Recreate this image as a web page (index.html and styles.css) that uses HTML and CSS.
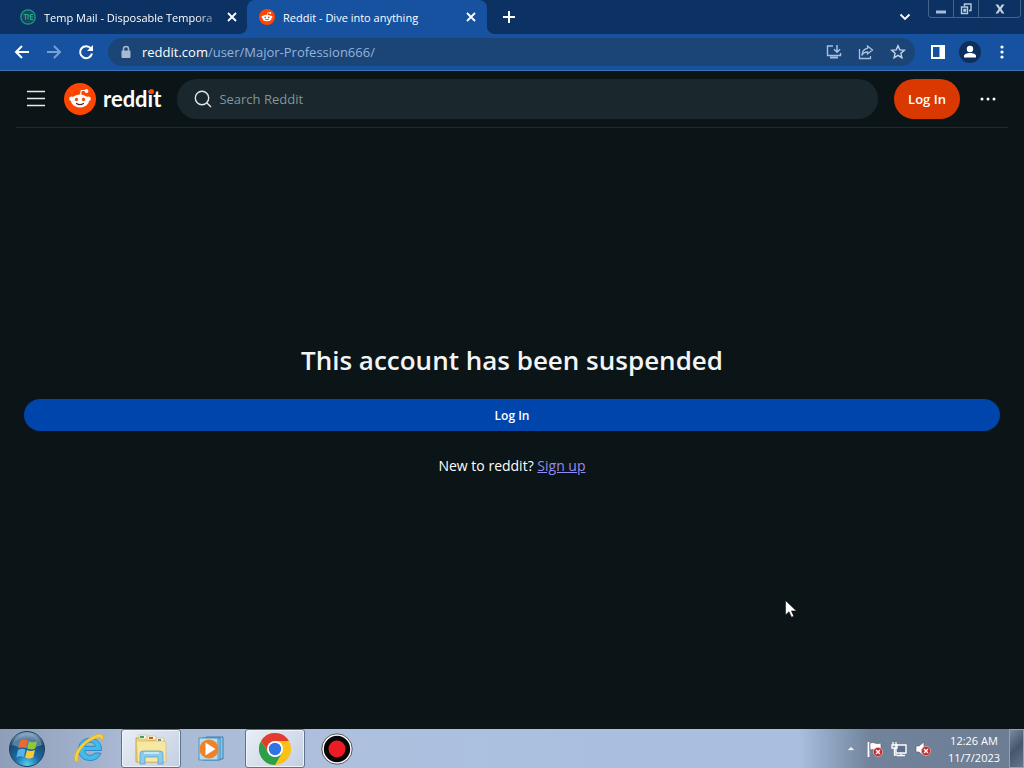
FILE: index.html
```html
<!DOCTYPE html>
<html lang="en">
<head>
  <meta charset="UTF-8">
  <meta name="viewport" content="width=device-width, initial-scale=1.0">
  <title>Reddit - Dive into anything</title>
  <link rel="stylesheet" href="styles.css">
</head>
<body>
  <svg class="sprite" aria-hidden="true">
    <symbol id="snoo" viewBox="0 0 32 32">
      <circle cx="16" cy="16" r="16" fill="#ff4500"/>
      <path d="M16.500 12L17.300 7.500h4" fill="none" stroke="#fff" stroke-width="1.200"/>
      <circle cx="22.500" cy="8" r="1.900" fill="#fff"/>
      <circle cx="7.600" cy="15.800" r="2.400" fill="#fff"/>
      <circle cx="24.400" cy="15.800" r="2.400" fill="#fff"/>
      <ellipse cx="16" cy="18" rx="9" ry="6.400" fill="#fff"/>
      <circle cx="12.500" cy="16.500" r="1.700" fill="#ff4500"/>
      <circle cx="19.500" cy="16.500" r="1.700" fill="#ff4500"/>
      <path d="M12.500 20.500q3.500 2.200 7 0" fill="none" stroke="#4a2a20" stroke-width="1.200" stroke-linecap="round"/>
    </symbol>
    <symbol id="close" viewBox="0 0 10 10">
      <path d="M1 1l8 8M9 1L1 9" fill="none" stroke="#fff" stroke-width="1.8"/>
    </symbol>
    <symbol id="error" viewBox="0 0 10 10">
      <circle cx="5" cy="5" r="4.6" fill="#c62b2b" stroke="#f0c4c4" stroke-width=".6"/>
      <path d="M3 3l4 4M7 3L3 7" stroke="#fff" stroke-width="1.4"/>
    </symbol>
  </svg>

  <!-- Tabs -->
  <div class="tab-strip">
    <div class="tab">
      <svg class="favicon" viewBox="0 0 16 16"><circle cx="8" cy="8" r="7.2" fill="#15485c" stroke="#1d9c8b" stroke-width="1.3"/><path d="M3.5 5.5h4M5.5 5.5v5M8 10.5v-5l1.5 2M13 5.5h-2.5v5H13M10.5 8H13" fill="none" stroke="#2bab8f"/></svg>
      <span class="tab-title fade">Temp Mail - Disposable Tempora</span>
      <button class="tab-close" aria-label="Close tab"><svg width="10" height="10"><use href="#close"/></svg></button>
    </div>
    <div class="tab active">
      <svg class="favicon"><use href="#snoo"/></svg>
      <span class="tab-title">Reddit - Dive into anything</span>
      <button class="tab-close" aria-label="Close tab"><svg width="10" height="10"><use href="#close"/></svg></button>
    </div>
    <button class="new-tab" aria-label="New tab"><svg width="12" height="12" viewBox="0 0 12 12"><path d="M6 0v12M0 6h12" stroke="#fff" stroke-width="2"/></svg></button>
    <button class="tab-search" aria-label="Search tabs"><svg width="12" height="8" viewBox="0 0 12 8"><path d="M1.5 1.5L6 6l4.5-4.5" fill="none" stroke="#fff" stroke-width="1.8"/></svg></button>
    <div class="window-buttons">
      <button aria-label="Minimize"><svg width="12" height="12" viewBox="0 0 12 12"><path d="M1 7.5h10v3H1z" fill="#a9bdd2"/></svg></button>
      <button aria-label="Restore"><svg width="12" height="12" viewBox="0 0 12 12"><path d="M4.5 3V1h6.500v6.500H9M1.500 4h6v6.500h-6zM4 6.500h1.500v1.500H4z" fill="none" stroke="#b9cadb" stroke-width="1.400"/></svg></button>
      <button class="wide" aria-label="Close"><svg width="12" height="12" viewBox="0 0 12 12"><path d="M1.500 1.500h2.700L6 4.300l1.800-2.800h2.700L7.400 6l3.100 4.500H7.800L6 7.700l-1.800 2.800H1.500L4.600 6z" fill="#c1cfde"/></svg></button>
    </div>
  </div>

  <!-- Toolbar -->
  <div class="toolbar">
    <button class="tool" aria-label="Back"><svg width="16" height="16" viewBox="0 0 16 16"><path d="M15 8H2M8 2L2 8l6 6" fill="none" stroke="#fff" stroke-width="2"/></svg></button>
    <button class="tool" aria-label="Forward"><svg width="16" height="16" viewBox="0 0 16 16"><path d="M1 8h13M8 2l6 6-6 6" fill="none" stroke="#76a0d6" stroke-width="2"/></svg></button>
    <button class="tool" aria-label="Reload"><svg width="16" height="16" viewBox="0 0 16 16"><path d="M13 4.600A6 6 0 1 0 14 9.500" fill="none" stroke="#fff" stroke-width="2"/><path d="M15 1v6H9z" fill="#fff"/></svg></button>
    <div class="omnibox">
      <svg width="12" height="14" viewBox="0 0 12 14"><path d="M3.500 6V4a2.500 2.500 0 0 1 5 0v2" fill="none" stroke="#a9b9cf" stroke-width="1.500"/><rect x="1.500" y="5.500" width="9" height="7.500" rx="1" fill="#a9b9cf"/></svg>
      <a class="url" href="#"><b>reddit.com</b>/user/Major-Profession666/</a>
      <button class="tool" aria-label="Install"><svg width="16" height="16" viewBox="0 0 16 16"><path d="M7 2H1.500v9.500h13V9" fill="none" stroke="#a8c0e0" stroke-width="1.400"/><path d="M4 12.500h8v2H4z" fill="#a8c0e0"/><path d="M11 1v7M8 5.200l3 3 3-3" fill="none" stroke="#a8c0e0" stroke-width="1.500"/></svg></button>
      <button class="tool" aria-label="Share"><svg width="16" height="16" viewBox="0 0 16 16"><path d="M1.500 5v9.500h11V12M9.500 2l5 4-5 4V8C7 8 5 9 3.800 11.500 4.200 7 6.500 4.800 9.500 4.400z" fill="none" stroke="#a8c0e0" stroke-width="1.300"/></svg></button>
      <button class="tool" aria-label="Bookmark"><svg width="16" height="16" viewBox="0 0 16 16"><path d="M8 1.800l1.800 4.100 4.500.4-3.400 3 1 4.400L8 11.400l-3.900 2.300 1-4.400-3.400-3 4.500-.4z" fill="none" stroke="#c3d4ec" stroke-width="1.400"/></svg></button>
    </div>
    <button class="tool" aria-label="Side panel"><svg width="14" height="14" viewBox="0 0 14 14"><path d="M0 0h14v14H0zM2 2v10h6.500V2z" fill="#fff" fill-rule="evenodd"/></svg></button>
    <button class="tool" aria-label="Profile"><svg width="22" height="22" viewBox="0 0 22 22"><circle cx="11" cy="11" r="11" fill="#0c2f5e"/><circle cx="11" cy="8" r="3.200" fill="#fff"/><path d="M5 16.500v-1.500c0-2 3-3 6-3s6 1 6 3v1.500z" fill="#fff"/></svg></button>
    <button class="tool" aria-label="Menu"><svg width="4" height="14" viewBox="0 0 4 14"><g fill="#fff"><circle cx="2" cy="2" r="1.600"/><circle cx="2" cy="7" r="1.600"/><circle cx="2" cy="12" r="1.600"/></g></svg></button>
  </div>

  <!-- Reddit page -->
  <header class="site-header">
    <button class="icon-btn" aria-label="Open navigation"><svg width="20" height="18" viewBox="0 0 20 18"><path d="M1 1.500h18M1 8.500h18M1 15.500h18" stroke="#e6ebed" stroke-width="1.400"/></svg></button>
    <a class="logo" href="#">
      <svg width="32" height="32"><use href="#snoo"/></svg>
      <span class="wordmark">redd<span class="dot">i</span>t</span>
    </a>
    <label class="search">
      <svg width="18" height="18" viewBox="0 0 18 18"><circle cx="8" cy="8" r="6.700" fill="none" stroke="#e2e8ea" stroke-width="1.400"/><path d="M12.700 12.700L17 17" stroke="#e2e8ea" stroke-width="1.400"/></svg>
      <input type="search" placeholder="Search Reddit" aria-label="Search Reddit">
    </label>
    <button class="login">Log In</button>
    <button class="icon-btn" aria-label="More"><svg width="16" height="4" viewBox="0 0 16 4"><g fill="#fff"><circle cx="2" cy="2" r="1.500"/><circle cx="8" cy="2" r="1.500"/><circle cx="14" cy="2" r="1.500"/></g></svg></button>
  </header>

  <main class="suspended">
    <h1>This account has been suspended</h1>
    <button class="login-wide">Log In</button>
    <p>New to reddit? <a href="#">Sign up</a></p>
  </main>

  <!-- Taskbar -->
  <footer class="taskbar">
    <button class="start" aria-label="Start">
      <svg width="38" height="38" viewBox="0 0 38 38">
        <defs>
          <radialGradient id="orb" cx=".5" cy=".95" r=".9"><stop offset="0" stop-color="#4fd2f2"/><stop offset=".4" stop-color="#1b6aa5"/><stop offset=".8" stop-color="#1c4770"/><stop offset="1" stop-color="#7d9dba"/></radialGradient>
        </defs>
        <circle cx="19" cy="19" r="17.500" fill="url(#orb)" stroke="#20415f"/>
        <path d="M4 15a15.500 15.500 0 0 1 30 0q-15 6-30 0z" fill="#b5cadb" opacity=".4"/>
        <path d="M12 11q4-2.500 7.500-.5L17.800 18q-3.500-1.700-7.500.5z" fill="#ee6a2a"/>
        <path d="M21 11.200q3.500 2 8 0L27.300 18.500q-4 2-8 0z" fill="#91c63f"/>
        <path d="M10 20q4-2.300 7.500-.4L15.800 27q-3.500-1.800-7.500.5z" fill="#55b3e8"/>
        <path d="M19 20q3.500 2 8 0l-1.800 7.500q-4 2-8 0z" fill="#fdc935"/>
      </svg>
    </button>
    <button class="task" aria-label="Internet Explorer">
      <svg width="34" height="34" viewBox="0 0 34 34">
        <path d="M29.500 18.500H12.800c.3 3 2.500 4.800 5.300 4.800 2.300 0 3.700-.8 4.700-2.300h6c-1.600 5-5.500 7.500-10.700 7.500C11 28.500 6.500 24 6.500 17.500S11.200 6.200 18 6.200c7.300 0 11.700 4.800 11.500 12.300zm-6.300-4.200c-.4-2.500-2.200-4-5-4-2.700 0-4.700 1.500-5.300 4z" fill="#43b9ec" stroke="#1f7fbe" stroke-width=".8"/>
        <path d="M4 30C0 27 4 16 13 9.500 20 3.500 28 .500 30.500 3c1.500 1.500.8 4-.5 6 0-3-2-4.500-7-2.300C13 10.500 4 21 6.500 28.500z" fill="#f7cf3c" stroke="#d9a520" stroke-width=".5"/>
      </svg>
    </button>
    <button class="task open" aria-label="Windows Explorer">
      <svg width="34" height="34" viewBox="0 0 34 34">
        <path d="M2 6h10l2 2h16v22H2z" fill="#efd787" stroke="#c6a64e"/>
        <path d="M5 3h8v4H5zM13 4h9v4h-9zM22 6h8v4h-8z" fill="#fbf6db" stroke="#c9b878" stroke-width=".6"/>
        <path d="M6 4h4v2H6z" fill="#3fa64b"/><path d="M15 5h4v2h-4z" fill="#d3563a"/><path d="M24 7h3v2h-3z" fill="#4d87cb"/>
        <path d="M2.500 9h28l1.500 2v19H3.500z" fill="#f8e79f" stroke="#d5b65a" stroke-width=".6"/>
        <path d="M6 32V22q0-3 3-3h17q3 0 3 3v10h-5v-7H11v7z" fill="#8ccbea" stroke="#4f9cc8" stroke-width=".7"/>
        <path d="M10 21h15" stroke="#d8f1fb" stroke-width="1.500"/>
      </svg>
    </button>
    <button class="task" aria-label="Windows Media Player">
      <svg width="30" height="28" viewBox="0 0 30 28">
        <path d="M8 2h17v22H8z" fill="#8bc7e6" stroke="#3c7fae"/>
        <path d="M5 3h17v22H5z" fill="#a4d6ee" stroke="#3c7fae"/>
        <path d="M1 3h19v22H1z" fill="#b6def2" stroke="#4b93bd"/>
        <circle cx="11" cy="14" r="9.500" fill="#ef8128"/>
        <path d="M7.500 7.500l10 6.500-10 6.500z" fill="#fff"/>
      </svg>
    </button>
    <button class="task open" aria-label="Google Chrome">
      <svg width="32" height="32" viewBox="0 0 32 32">
        <circle cx="16" cy="16" r="16" fill="#fbc116"/>
        <path d="M16 16L9.500 19.700 2.140 8A16 16 0 0 1 29.860 8H16z" fill="#e33b2e"/>
        <path d="M2.140 8A16 16 0 0 0 16 32l7-12H16L9.500 20z" fill="#2d9f4b"/>
        <circle cx="16" cy="16" r="8" fill="#fff"/>
        <circle cx="16" cy="16" r="6.200" fill="#2f74e4"/>
      </svg>
    </button>
    <button class="task" aria-label="Screen recorder">
      <svg width="32" height="32" viewBox="0 0 32 32"><circle cx="16" cy="16" r="15.200" fill="#fff" stroke="#333" stroke-width=".8"/><circle cx="16" cy="16" r="13.200" fill="#050505"/><circle cx="16" cy="16" r="8.500" fill="#ed1c24"/></svg>
    </button>
    <div class="tray">
      <svg width="8" height="5" viewBox="0 0 8 5"><path d="M0 4.500L4 .5l4 4z" fill="#eef2f6" stroke="#53657c" stroke-width=".4"/></svg>
      <svg width="16" height="16" viewBox="0 0 16 16"><path d="M1.500 1v15" stroke="#fff" stroke-width="1.800"/><path d="M3 2q3-1 5 0t6 0v7q-3 1-6 0T3 9z" fill="#fff" stroke="#4d5c70" stroke-width=".6"/><use href="#error" x="6" y="6" width="10" height="10"/></svg>
      <svg width="16" height="16" viewBox="0 0 16 16"><path d="M5 4h10v8H5z" fill="#5b6f88" stroke="#fff" stroke-width="1.400"/><path d="M6 14.500h8M10 12v2M2 1v3M5 1v3M1 4h5v3H1zM3.500 7v7H6" fill="none" stroke="#fff" stroke-width="1.300"/></svg>
      <svg width="16" height="16" viewBox="0 0 16 16"><path d="M1 5h3l5-4v14l-5-4H1z" fill="#fff" stroke="#4d5c70" stroke-width=".6"/><use href="#error" x="6" y="5" width="10" height="10"/></svg>
      <div class="clock"><time>12:26 AM</time><time>11/7/2023</time></div>
      <button class="show-desktop" aria-label="Show desktop"></button>
    </div>
  </footer>

  <svg class="cursor" width="12" height="18" viewBox="0 0 12 18" aria-hidden="true"><path d="M.5.5v14.500l3.500-3.300 2.500 5.500 2.300-1-2.400-5.300h5z" fill="#fff" stroke="#000" stroke-width=".5"/></svg>
</body>
</html>
```
FILE: styles.css
```css
* {
  box-sizing: border-box;
}

body {
  margin: 0;
  min-height: 100vh;
  display: flex;
  flex-direction: column;
  background: #0b1416;
  color: #fff;
  font-family: "Segoe UI", "Open Sans", sans-serif;
  font-size: 12px;
}

button {
  display: flex;
  align-items: center;
  justify-content: center;
  padding: 0;
  border: none;
  background: none;
  color: inherit;
  font: inherit;
  cursor: pointer;
}

svg {
  flex: none;
}

.sprite {
  position: absolute;
  width: 0;
  height: 0;
}

/* Tabs */
.tab-strip {
  display: flex;
  height: 34px;
  background: #0b3262;
}

.tab {
  display: flex;
  align-items: center;
  gap: 8px;
  width: 240px;
  padding: 0 8px 0 12px;
}

.tab:first-child {
  margin-left: 8px;
}

.tab.active {
  position: relative;
  margin-left: -1px;
  background: #1652a0;
  border-radius: 8px 8px 0 0;
}

/* curved feet of the active tab */
.tab.active::before,
.tab.active::after {
  content: "";
  position: absolute;
  bottom: 0;
  width: 8px;
  height: 8px;
}

.tab.active::before {
  left: -8px;
  background: radial-gradient(circle at 0 0, transparent 8px, #1652a0 8px);
}

.tab.active::after {
  right: -8px;
  background: radial-gradient(circle at 100% 0, transparent 8px, #1652a0 8px);
}

.favicon {
  width: 16px;
  height: 16px;
}

.tab-title {
  flex: 1;
  font-size: 11px;
  font-weight: 500;
  white-space: nowrap;
}

.tab-title.fade {
  mask-image: linear-gradient(to right, #000 88%, transparent 105%);
}

.tab-close {
  width: 16px;
  height: 16px;
}

.new-tab {
  width: 28px;
  margin-left: 8px;
}

.tab-search {
  width: 28px;
  margin-left: auto;
}

.window-buttons {
  display: flex;
  align-self: flex-start;
  height: 18px;
  margin: 0 3px 0 9px;
  border: 1px solid #42648d;
  border-top: none;
  border-radius: 0 0 4px 4px;
}

.window-buttons button {
  width: 25px;
  border-right: 1px solid #42648d;
}

.window-buttons .wide {
  width: 41px;
  border-right: none;
}

/* Toolbar */
.toolbar {
  display: flex;
  align-items: center;
  height: 37px;
  padding: 0 6px;
  background: #1652a0;
  border-bottom: 1px solid #3a74b4;
}

.tool {
  width: 32px;
  height: 28px;
}

.omnibox {
  flex: 1;
  display: flex;
  align-items: center;
  height: 28px;
  margin: 0 7px 0 6px;
  padding: 0 1px 0 12px;
  border-radius: 14px;
  background: #1b4477;
}

.url {
  flex: 1;
  margin-left: 10px;
  color: #94b3dc;
  font-size: 13px;
  text-decoration: none;
}

.url b {
  color: #fff;
  font-weight: 400;
}

/* Site header */
.site-header {
  display: flex;
  align-items: center;
  height: 57px;
  margin: 0 16px;
  border-bottom: 1px solid #1e2a2d;
}

.icon-btn {
  width: 40px;
  height: 40px;
}

.logo {
  display: flex;
  align-items: center;
  gap: 7px;
  margin: 0 16px 0 8px;
  color: #fff;
  text-decoration: none;
}

.wordmark {
  font-family: Lato, sans-serif;
  font-size: 22px;
  font-weight: 700;
  line-height: 32px;
}

.dot {
  position: relative;
}

.dot::after {
  content: "";
  position: absolute;
  top: 4px;
  left: 1px;
  width: 5px;
  height: 5px;
  border-radius: 50%;
  background: #ff4500;
}

.search {
  flex: 1;
  display: flex;
  align-items: center;
  gap: 7px;
  height: 40px;
  padding: 0 17px;
  border-radius: 20px;
  background: #1a282d;
}

.search input {
  flex: 1;
  min-width: 0;
  padding: 0;
  border: none;
  outline: none;
  background: none;
  color: #fff;
  font: inherit;
  font-size: 13px;
}

.search input::placeholder {
  color: #82959b;
}

.login {
  width: 66px;
  height: 40px;
  margin: 0 8px 0 16px;
  border-radius: 20px;
  background: #d93900;
  font-size: 13px;
  font-weight: 600;
}

/* Suspended account */
.suspended {
  flex: 1;
  display: flex;
  flex-direction: column;
  justify-content: center;
  padding: 0 24px 40px;
  text-align: center;
}

.suspended h1 {
  margin: 0 0 19px;
  color: #f2f4f5;
  font-size: 26px;
  font-weight: 600;
  line-height: 40px;
}

.login-wide {
  height: 32px;
  border-radius: 16px;
  background: #0045ac;
  font-weight: 600;
}

.suspended p {
  margin: 24px 0 0;
  font-size: 14px;
  line-height: 22px;
}

.suspended a {
  color: #958bf0;
}

/* Taskbar */
.taskbar {
  display: flex;
  gap: 2px;
  height: 39px;
  background: linear-gradient(to right, #8e9db8, #a9b9d3 12%, #adc0de 35%, #a8bfe0 78%, #71839b 85%, #6c7d93);
}

.start {
  width: 54px;
  margin-right: 3px;
}

.task {
  width: 60px;
}

.task.open {
  border: 1px solid #5f7290;
  border-radius: 3px;
  background: linear-gradient(135deg, #e9eef6, #c3cfe2);
  box-shadow: inset 0 0 0 1px #eef3fa;
}

.tray {
  display: flex;
  align-items: center;
  margin-left: auto;
}

.tray svg {
  margin-right: 8px;
}

.tray svg:first-child {
  margin-right: 12px;
}

.clock {
  display: flex;
  flex-direction: column;
  width: 70px;
  line-height: 17px;
  text-align: center;
  font-size: 11px;
}

.show-desktop {
  align-self: stretch;
  width: 15px;
  border: 1px solid #93a1b3;
  background: linear-gradient(135deg, #7c8b9f, #46566b 50%, #65758b);
}

/* Mouse pointer */
.cursor {
  position: absolute;
  top: 600px;
  left: 785px;
}
```
